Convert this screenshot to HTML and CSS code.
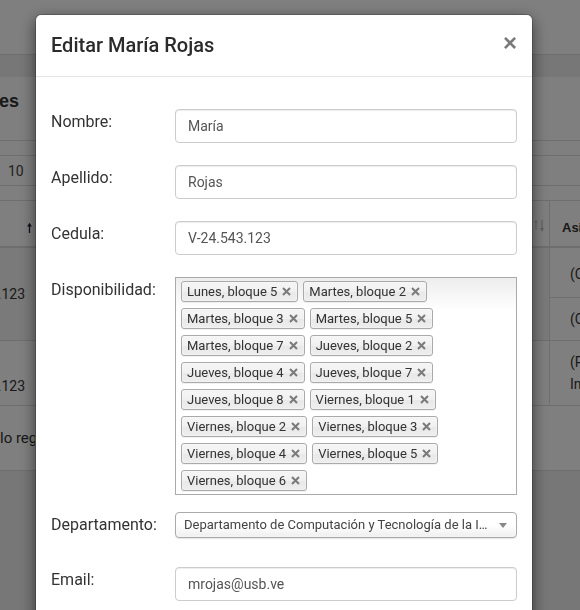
FILE: index.html
```html
<!DOCTYPE html>
<html lang="es">
<head>
<meta charset="utf-8">
<title>Editar María Rojas</title>
<link rel="stylesheet" href="styles.css">
</head>
<body>
<div class="page">
  <div class="bg-top"></div>
  <div class="bg-band"></div>
  <div class="bg-row bg-heading">
    <div class="cell-l end pad-r16"><span class="h-title">Profesores</span></div>
  </div>
  <div class="bg-row bg-gap"></div>
  <div class="bg-row bg-len">
    <div class="cell-l start"><span class="len">10</span></div>
  </div>
  <div class="bg-row bg-gap"></div>
  <div class="bg-row bg-thead">
    <div class="cell-l end pad-r3">
      <svg class="sort-asc" width="5" height="18" viewBox="0 0 5 18"><path d="M2.5 8.5V18" stroke="#1c2733" stroke-width="1.3"/><path d="M0 11.5L2.5 8L5 11.5Z" fill="#1c2733"/></svg>
    </div>
    <div class="cell-m"></div>
    <div class="cell-r1">
      <svg width="12" height="18" viewBox="0 0 12 18"><path d="M2 4V14" stroke="#d6d6d6" stroke-width="1.2"/><path d="M0 7L2 4L4 7Z" fill="#d6d6d6"/><path d="M8 4V15" stroke="#bdbdbd" stroke-width="1.2"/><path d="M6 12L8 15.5L10 12Z" fill="#bdbdbd"/></svg>
    </div>
    <div class="cell-r2 th">Asignaturas</div>
  </div>
  <div class="bg-row bg-tr1">
    <div class="cell-l end pad-r10 stripe"><span>V-24.543.123</span></div>
    <div class="cell-m"></div>
    <div class="cell-r1 stripe"></div>
    <div class="cell-r2 split">
      <div class="sub sub-first">(CI-2525) Estructuras</div>
      <div class="sub">(CI-3641) Lenguajes</div>
    </div>
  </div>
  <div class="bg-row bg-tr2">
    <div class="cell-l end pad-r10 lower"><span>V-20.111.123</span></div>
    <div class="cell-m"></div>
    <div class="cell-r1"></div>
    <div class="cell-r2 two-lines"><span>(PS-1111) Proyecto</span><span>Ingeniería</span></div>
  </div>
  <div class="bg-row bg-info">
    <div class="cell-l start"><span class="info">lo registros</span></div>
  </div>
  <div class="bg-foot"></div>
</div>

<div class="backdrop"></div>

<div class="modal">
  <div class="dialog">
    <div class="dialog-head">
      <h4 class="dialog-title">Editar María Rojas</h4>
      <span class="close">×</span>
    </div>
    <div class="dialog-body">
      <div class="form-row">
        <label class="form-label">Nombre:</label>
        <input class="form-input" type="text" value="María">
      </div>
      <div class="form-row">
        <label class="form-label">Apellido:</label>
        <input class="form-input" type="text" value="Rojas">
      </div>
      <div class="form-row">
        <label class="form-label">Cedula:</label>
        <input class="form-input" type="text" value="V-24.543.123">
      </div>
      <div class="form-row row-multi">
        <label class="form-label">Disponibilidad:</label>
        <ul class="choices">
          <li class="tag">Lunes, bloque 5<svg class="tag-x" width="9" height="9" viewBox="0 0 9 9"><path d="M1 1L8 8M8 1L1 8"/></svg></li>
          <li class="tag">Martes, bloque 2<svg class="tag-x" width="9" height="9" viewBox="0 0 9 9"><path d="M1 1L8 8M8 1L1 8"/></svg></li>
          <li class="tag">Martes, bloque 3<svg class="tag-x" width="9" height="9" viewBox="0 0 9 9"><path d="M1 1L8 8M8 1L1 8"/></svg></li>
          <li class="tag">Martes, bloque 5<svg class="tag-x" width="9" height="9" viewBox="0 0 9 9"><path d="M1 1L8 8M8 1L1 8"/></svg></li>
          <li class="tag">Martes, bloque 7<svg class="tag-x" width="9" height="9" viewBox="0 0 9 9"><path d="M1 1L8 8M8 1L1 8"/></svg></li>
          <li class="tag">Jueves, bloque 2<svg class="tag-x" width="9" height="9" viewBox="0 0 9 9"><path d="M1 1L8 8M8 1L1 8"/></svg></li>
          <li class="tag">Jueves, bloque 4<svg class="tag-x" width="9" height="9" viewBox="0 0 9 9"><path d="M1 1L8 8M8 1L1 8"/></svg></li>
          <li class="tag">Jueves, bloque 7<svg class="tag-x" width="9" height="9" viewBox="0 0 9 9"><path d="M1 1L8 8M8 1L1 8"/></svg></li>
          <li class="tag">Jueves, bloque 8<svg class="tag-x" width="9" height="9" viewBox="0 0 9 9"><path d="M1 1L8 8M8 1L1 8"/></svg></li>
          <li class="tag">Viernes, bloque 1<svg class="tag-x" width="9" height="9" viewBox="0 0 9 9"><path d="M1 1L8 8M8 1L1 8"/></svg></li>
          <li class="tag">Viernes, bloque 2<svg class="tag-x" width="9" height="9" viewBox="0 0 9 9"><path d="M1 1L8 8M8 1L1 8"/></svg></li>
          <li class="tag">Viernes, bloque 3<svg class="tag-x" width="9" height="9" viewBox="0 0 9 9"><path d="M1 1L8 8M8 1L1 8"/></svg></li>
          <li class="tag">Viernes, bloque 4<svg class="tag-x" width="9" height="9" viewBox="0 0 9 9"><path d="M1 1L8 8M8 1L1 8"/></svg></li>
          <li class="tag">Viernes, bloque 5<svg class="tag-x" width="9" height="9" viewBox="0 0 9 9"><path d="M1 1L8 8M8 1L1 8"/></svg></li>
          <li class="tag">Viernes, bloque 6<svg class="tag-x" width="9" height="9" viewBox="0 0 9 9"><path d="M1 1L8 8M8 1L1 8"/></svg></li>
        </ul>
      </div>
      <div class="form-row row-select">
        <label class="form-label">Departamento:</label>
        <div class="select-single">
          <span class="select-text">Departamento de Computación y Tecnología de la Información</span>
          <span class="select-arrow"></span>
        </div>
      </div>
      <div class="form-row row-email">
        <label class="form-label">Email:</label>
        <input class="form-input" type="text" value="mrojas@usb.ve">
      </div>
    </div>
  </div>
</div>
</body>
</html>
```

FILE: styles.css
```css
html, body {
  margin: 0;
  padding: 0;
  height: 100%;
  overflow: hidden;
}
body {
  font-family: Roboto, "Liberation Sans", sans-serif;
  color: #333;
  background: #fff;
}

/* ---------- background page ---------- */
.page {
  display: flex;
  flex-direction: column;
  min-height: 100vh;
  width: 580px;
}
.bg-top { height: 54px; }
.bg-band {
  height: 22px;
  background: #eee;
  border-top: 1px solid #ddd;
}
.bg-row {
  display: grid;
  grid-template-columns: 35px 498px 16px 1fr;
  border-bottom: 1px solid #ddd;
}
.bg-heading { height: 63px; }
.bg-gap { height: 14px; }
.bg-len { height: 29px; }
.bg-thead { height: 45px; border-bottom-width: 2px; }
.bg-tr1 { height: 92px; }
.bg-tr2 { height: 64px; }
.bg-info { height: 64px; }
.bg-foot { flex: 1; background: #eee; }

.cell-l {
  display: flex;
  overflow: hidden;
  white-space: nowrap;
  font-size: 14px;
  align-items: center;
}
.cell-l.end { justify-content: flex-end; }
.cell-l.start { justify-content: flex-start; }
.pad-r16 { padding-right: 16px; }
.pad-r3 { padding-right: 3px; }
.pad-r10 { padding-right: 10px; }
.stripe { background: #f5f5f5; }

.bg-heading .cell-l { align-items: flex-start; padding-top: 12px; }
.h-title {
  font-family: "Liberation Sans", Arial, sans-serif;
  font-weight: bold;
  font-size: 18px;
  line-height: 24px;
}
.len { padding-left: 8px; font-size: 14px; color: #444; }
.bg-thead .cell-l { align-items: flex-end; padding-bottom: 13px; }
.sort-asc { display: block; }
.cell-r1 { display: flex; align-items: flex-end; }
.bg-thead .cell-r1 { padding-bottom: 12px; padding-left: 1px; }
.cell-r2 {
  border-left: 1px solid #ddd;
  overflow: hidden;
  white-space: nowrap;
  font-size: 14px;
}
.th {
  display: flex;
  align-items: flex-end;
  padding: 0 0 8px 12px;
  font-family: "Liberation Sans", Arial, sans-serif;
  font-weight: bold;
  font-size: 13px;
  line-height: 20px;
}
.split { display: flex; flex-direction: column; }
.sub {
  flex: 1;
  display: flex;
  align-items: center;
  padding-left: 20px;
}
.sub-first { border-bottom: 1px solid #ddd; flex: 0 0 46px; padding-top: 3px; }
.two-lines {
  display: flex;
  flex-direction: column;
  justify-content: center;
  padding-left: 20px;
  line-height: 22px;
}
.lower { align-items: flex-end; padding-bottom: 9px; line-height: 20px; }
.info { font-size: 15px; }

/* ---------- overlay ---------- */
.backdrop {
  position: fixed;
  inset: 0;
  background: rgba(0, 0, 0, 0.5);
}
.modal {
  position: fixed;
  inset: 0;
  overflow: hidden;
}
.dialog {
  box-sizing: border-box;
  width: 498px;
  margin: 14px 0 0 35px;
  background: #fff;
  border: 1px solid rgba(0, 0, 0, 0.2);
  border-radius: 6px;
  box-shadow: 0 5px 15px rgba(0, 0, 0, 0.5);
  background-clip: padding-box;
}
.dialog-head {
  display: flex;
  justify-content: space-between;
  align-items: flex-start;
  padding: 15px;
  border-bottom: 1px solid #e5e5e5;
}
.dialog-title {
  margin: 0;
  font-size: 20px;
  font-weight: 500;
  line-height: 31px;
  color: #2b2b2b;
}
.close {
  font-family: "Liberation Sans", Arial, sans-serif;
  font-size: 24px;
  font-weight: bold;
  line-height: 25px;
  color: #7a7a7a;
}
.dialog-body {
  padding: 32px 15px 20px;
}
.form-row {
  display: grid;
  grid-template-columns: 124px minmax(0, 1fr);
  align-items: start;
  margin-bottom: 22px;
}
.row-multi { margin-bottom: 17px; }
.row-select { margin-bottom: 29px; }
.form-label {
  font-size: 16px;
  line-height: 25px;
  color: #333;
}
.form-input {
  box-sizing: border-box;
  width: 100%;
  height: 34px;
  margin: 0;
  padding: 6px 12px;
  font-family: Roboto, "Liberation Sans", sans-serif;
  font-size: 14px;
  color: #555;
  background: #fff;
  border: 1px solid #ccc;
  border-radius: 4px;
  box-shadow: inset 0 1px 1px rgba(0, 0, 0, 0.075);
  outline: none;
}

/* multi select */
.choices {
  box-sizing: border-box;
  height: 218px;
  margin: 0;
  padding: 0;
  list-style: none;
  display: flex;
  flex-wrap: wrap;
  align-content: flex-start;
  border: 1px solid #aaa;
  background-color: #fff;
  background-image: linear-gradient(to bottom, #eee 1%, #fff 15%);
}
.tag {
  display: flex;
  align-items: center;
  gap: 5px;
  margin: 3px 0 3px 5px;
  padding: 3px 6px 3px 5px;
  font-size: 13px;
  line-height: 13px;
  color: #333;
  border: 1px solid #aaa;
  border-radius: 3px;
  background: linear-gradient(to bottom, #f4f4f4 20%, #f0f0f0 50%, #e8e8e8 52%, #eee 100%);
  box-shadow: 0 0 2px #fff inset, 0 1px 0 rgba(0, 0, 0, 0.05);
  white-space: nowrap;
}
.tag-x {
  display: block;
  fill: none;
  stroke: #7a7a7a;
  stroke-width: 2;
}

/* single select */
.select-single {
  box-sizing: border-box;
  height: 26px;
  min-width: 0;
  display: flex;
  align-items: center;
  padding-left: 8px;
  border: 1px solid #aaa;
  border-radius: 4px;
  background: linear-gradient(to top, #eee 0%, #fff 50%);
  box-shadow: 0 0 3px #fff inset, 0 1px 1px rgba(0, 0, 0, 0.1);
  font-size: 13px;
  line-height: 24px;
  color: #444;
}
.select-text {
  flex: 1;
  min-width: 0;
  overflow: hidden;
  white-space: nowrap;
  text-overflow: ellipsis;
}
.select-arrow {
  flex: 0 0 26px;
  display: flex;
  justify-content: center;
  align-items: center;
  height: 100%;
}
.select-arrow::before {
  content: "";
  border-left: 4px solid transparent;
  border-right: 4px solid transparent;
  border-top: 5px solid #888;
}
```
